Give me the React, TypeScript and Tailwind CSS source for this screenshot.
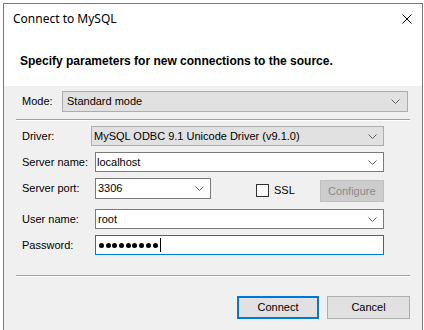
import React from "react";

const Chevron = ({ className = "" }: { className?: string }) => (
  <svg width="9" height="5" viewBox="0 0 9 5" className={className}>
    <polyline points="0.5,0.5 4.5,4.5 8.5,0.5" fill="none" stroke="#606060" strokeWidth="1" />
  </svg>
);

const Label = ({ children }: { children: React.ReactNode }) => (
  <div className="w-[73px] shrink-0 pl-[0px] text-[11px] leading-[13px] text-black">{children}</div>
);

export default function App() {
  const f = { fontFamily: '"Liberation Sans", Arial, sans-serif' };
  const dots = [0, 1, 2, 3, 4, 5, 6, 7, 8];
  return (
    <div className="w-[424px] h-[330px] bg-white overflow-hidden" style={f}>
      <div className="ml-[3px] mt-[3px] w-[420px] h-[340px] border border-[#7a7a7a] flex flex-col">
        {/* title bar */}
        <div className="h-[30px] bg-white flex items-center pl-[9px] pr-[10px] shrink-0">
          <span className="text-[12px] text-black" style={{ fontFamily: '"Noto Sans", "Open Sans", sans-serif' }}>
            Connect to MySQL
          </span>
          <svg width="10" height="10" viewBox="0 0 10 10" className="ml-auto">
            <line x1="0.5" y1="0.5" x2="9.5" y2="9.5" stroke="#000" strokeWidth="1" />
            <line x1="9.5" y1="0.5" x2="0.5" y2="9.5" stroke="#000" strokeWidth="1" />
          </svg>
        </div>
        {/* header */}
        <div className="h-[52px] bg-white pt-[20px] pl-[16px] shrink-0">
          <div className="text-[12px] leading-[14px] font-bold text-black">
            Specify parameters for new connections to the source.
          </div>
        </div>
        {/* body */}
        <div className="flex-1 bg-[#f0f0f0] flex flex-col">
          {/* Mode */}
          <div className="mt-[5px] flex items-center pl-[18px] h-[21px]">
            <div className="w-[40px] text-[11px] text-black">Mode:</div>
            <div className="w-[346px] h-[21px] bg-[#e1e1e1] border border-[#adadad] flex items-center pl-[4px] pr-[7px]">
              <span className="text-[11px] text-black">Standard mode</span>
              <Chevron className="ml-auto" />
            </div>
          </div>
          {/* separator */}
          <div className="mt-[7px] ml-[12px] w-[394px] h-[2px] border-t border-[#a0a0a0] border-b border-b-white" />
          {/* Driver */}
          <div className="mt-[5px] flex items-center pl-[18px] h-[20px]">
            <div className="w-[69px] text-[11px] text-black">Driver:</div>
            <div className="w-[293px] h-[20px] bg-[#e1e1e1] border border-[#adadad] flex items-center pl-[2px] pr-[6px]">
              <span className="text-[11px] text-black">MySQL ODBC 9.1 Unicode Driver (v9.1.0)</span>
              <Chevron className="ml-auto" />
            </div>
          </div>
          {/* Server name */}
          <div className="mt-[6px] flex items-center pl-[18px] h-[20px]">
            <Label>Server name:</Label>
            <div className="w-[289px] h-[20px] bg-white border border-[#7a7a7a] flex items-center pl-[1px] pr-[6px]">
              <span className="text-[11px] text-black">localhost</span>
              <Chevron className="ml-auto" />
            </div>
          </div>
          {/* Server port */}
          <div className="mt-[6px] flex items-start pl-[18px] h-[24px]">
            <div className="h-[21px] flex items-center">
              <Label>Server port:</Label>
            </div>
            <div className="w-[116px] h-[21px] bg-white border border-[#7a7a7a] flex items-center pl-[2px] pr-[6px]">
              <span className="text-[11px] text-black">3306</span>
              <Chevron className="ml-auto" />
            </div>
            <div className="ml-[45px] mt-[4px] flex items-center">
              <div className="w-[13px] h-[13px] bg-white border border-[#333333]" />
              <span className="ml-[5px] text-[11px] text-black">SSL</span>
            </div>
            <div className="ml-[25px] mt-[2px] w-[64px] h-[22px] bg-[#cccccc] border border-[#bfbfbf] flex items-center justify-center">
              <span className="text-[11px] text-[#8a8a8a]">Configure</span>
            </div>
          </div>
          {/* User name */}
          <div className="mt-[7px] flex items-center pl-[18px] h-[20px]">
            <Label>User name:</Label>
            <div className="w-[289px] h-[20px] bg-white border border-[#7a7a7a] flex items-center pl-[2px] pr-[6px]">
              <span className="text-[11px] text-black">root</span>
              <Chevron className="ml-auto" />
            </div>
          </div>
          {/* Password */}
          <div className="mt-[6px] flex items-center pl-[18px] h-[20px]">
            <Label>Password:</Label>
            <div className="w-[289px] h-[20px] bg-white border border-[#0078d7] flex items-center pl-[3px]">
              <div className="flex items-center gap-[1.7px]">
                {dots.map((d) => (
                  <span key={d} className="block w-[5px] h-[5px] rounded-full bg-black" />
                ))}
              </div>
              <span className="ml-[2px] w-[1px] h-[14px] bg-black" />
            </div>
          </div>
          {/* separator */}
          <div className="mt-[20px] ml-[12px] w-[394px] h-[2px] border-t border-[#a0a0a0] border-b border-b-white" />
          {/* buttons */}
          <div className="mt-[19px] flex pl-[233px]">
            <div className="w-[82px] h-[23px] bg-[#e1e1e1] border-2 border-[#0078d7] flex items-center justify-center">
              <span className="text-[11px] text-black">Connect</span>
            </div>
            <div className="ml-[8px] w-[83px] h-[23px] bg-[#e1e1e1] border border-[#adadad] flex items-center justify-center">
              <span className="text-[11px] text-black">Cancel</span>
            </div>
          </div>
        </div>
      </div>
    </div>
  );
}
